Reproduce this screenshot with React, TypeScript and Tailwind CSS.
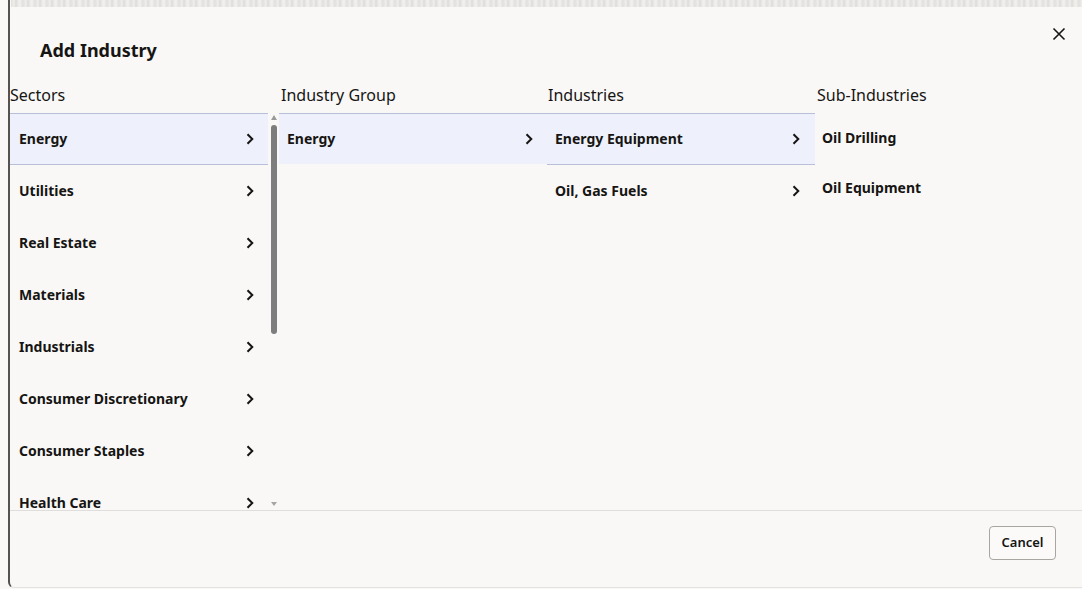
import React from "react";

type Item = { label: string; chevron?: boolean; selected?: boolean };

const sectors: Item[] = [
  { label: "Energy", chevron: true, selected: true },
  { label: "Utilities", chevron: true },
  { label: "Real Estate", chevron: true },
  { label: "Materials", chevron: true },
  { label: "Industrials", chevron: true },
  { label: "Consumer Discretionary", chevron: true },
  { label: "Consumer Staples", chevron: true },
  { label: "Health Care", chevron: true },
];

const groups: Item[] = [{ label: "Energy", chevron: true, selected: true }];

const industries: Item[] = [
  { label: "Energy Equipment", chevron: true, selected: true },
  { label: "Oil, Gas Fuels", chevron: true },
];

const subIndustries: Item[] = [{ label: "Oil Drilling" }, { label: "Oil Equipment" }];

function Chevron() {
  return (
    <svg width="8" height="12" viewBox="0 0 8 12" fill="none" className="shrink-0">
      <path d="M1.5 1.2 L6.3 6 L1.5 10.8" stroke="#161513" strokeWidth="2" strokeLinejoin="miter" />
    </svg>
  );
}

function CloseIcon() {
  return (
    <svg width="14" height="14" viewBox="0 0 14 14" fill="none">
      <path d="M1.5 1.5 L12.5 12.5 M12.5 1.5 L1.5 12.5" stroke="#161513" strokeWidth="1.6" />
    </svg>
  );
}

function Header({ children }: { children: React.ReactNode }) {
  return <div className="h-[31px] pt-[2px] text-[16px] leading-[22px] text-[#161513]">{children}</div>;
}

export default function App() {
  return (
    <div
      className="h-[589px] w-[1082px] overflow-hidden bg-[#f9f8f7] text-[#161513]"
      style={{ fontFamily: '"Noto Sans", "Open Sans", Arial, sans-serif' }}
    >
      <div className="ml-[8px] flex h-[588px] flex-col rounded-bl-[6px] border-b border-l-2 border-b-[#e4e2df] border-l-[#55524f]">
        {/* blurred strip along the top edge */}
        <div className="ml-[1px] h-[7px] bg-[repeating-linear-gradient(90deg,#dcdad7_0px,#eeece9_3px,#d6d4d1_5px,#e9e7e4_7px,#f1efec_9px,#dad8d5_12px)] opacity-80" />

        {/* title bar */}
        <div className="flex h-[75px] justify-between">
          <div className="pl-[30px] pt-[31px] text-[18px] font-bold leading-[24px]">Add Industry</div>
          <button className="mr-[15px] mt-[19px] flex h-[16px] w-[16px] items-center justify-center">
            <CloseIcon />
          </button>
        </div>

        {/* column headers */}
        <div className="grid grid-cols-[270px_267px_268px_1fr]">
          <Header>Sectors</Header>
          <Header>
            <span className="pl-[1px]">Industry Group</span>
          </Header>
          <Header>
            <span className="pl-[1px]">Industries</span>
          </Header>
          <Header>
            <span className="pl-[2px]">Sub-Industries</span>
          </Header>
        </div>

        {/* columns */}
        <div className="grid h-[397px] shrink-0 grid-cols-[270px_267px_268px_1fr] grid-rows-[397px] overflow-hidden text-[14px] font-bold leading-[20px]">
          {/* sectors with scrollbar */}
          <div className="flex h-[397px] min-h-0">
            <div className="h-full w-[258px] overflow-hidden">
              {sectors.map((s) => (
                <div
                  key={s.label}
                  className={`flex h-[52px] items-center justify-between border-y pl-[9px] pr-[14px] ${
                    s.selected ? "border-[#b7c0d8] bg-[#eef1fb]" : "border-transparent"
                  }`}
                >
                  <span className="leading-[16px]">{s.label}</span>
                  <Chevron />
                </div>
              ))}
            </div>
            <div className="flex w-[12px] flex-col items-center">
              <div className="mt-[2px] h-0 w-0 border-x-[3px] border-b-[5px] border-x-transparent border-b-[#9a9a9a]" />
              <div className="mt-[5px] h-[209px] w-[6px] rounded-full bg-[#7d7d7d]" />
              <div className="flex-1" />
              <div className="mb-[4px] h-0 w-0 border-x-[3px] border-t-[4px] border-x-transparent border-t-[#a5a5a5]" />
            </div>
          </div>

          {/* industry group */}
          <div className="-ml-[1px]">
            {groups.map((g) => (
              <div
                key={g.label}
                className="flex h-[51px] items-center justify-between border-t border-[#b7c0d8] bg-[#eef1fb] pl-[8px] pr-[14px]"
              >
                <span>{g.label}</span>
                <Chevron />
              </div>
            ))}
          </div>

          {/* industries */}
          <div>
            {industries.map((i) => (
              <div
                key={i.label}
                className={`flex h-[52px] items-center justify-between border-y pl-[8px] pr-[15px] ${
                  i.selected ? "border-[#b7c0d8] bg-[#eef1fb]" : "border-transparent"
                }`}
              >
                <span>{i.label}</span>
                <Chevron />
              </div>
            ))}
          </div>

          {/* sub-industries */}
          <div>
            {subIndustries.map((s) => (
              <div key={s.label} className="flex h-[50px] items-center pl-[7px]">
                <span>{s.label}</span>
              </div>
            ))}
          </div>
        </div>

        {/* footer */}
        <div className="flex flex-1 justify-end border-t border-[#e0dedb] pr-[26px] pt-[15px]">
          <button className="h-[34px] w-[67px] rounded-[4px] border border-[#a9a5a1] bg-[#fbfaf9] text-[13px] font-semibold text-[#161513]">
            Cancel
          </button>
        </div>
      </div>
    </div>
  );
}
